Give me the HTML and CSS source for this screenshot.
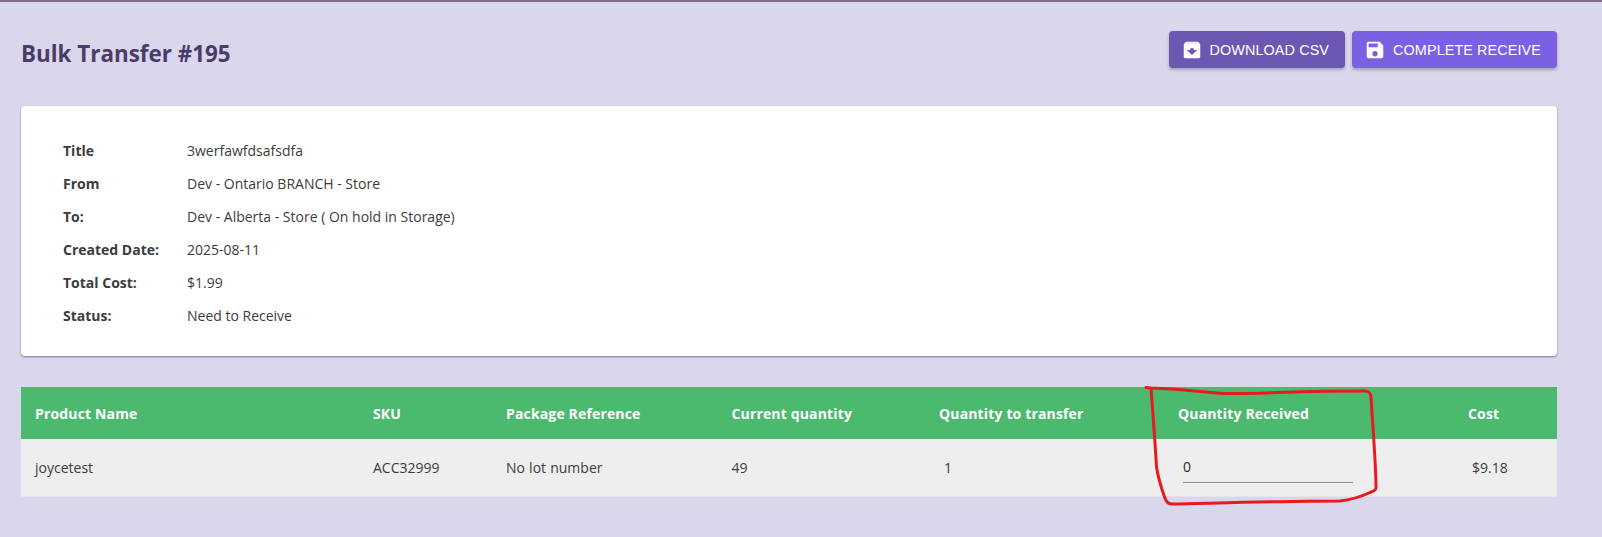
FILE: index.html
```html
<!DOCTYPE html>
<html lang="en">
<head>
<meta charset="utf-8">
<title>Bulk Transfer #195</title>
<link rel="stylesheet" href="styles.css">
</head>
<body>
<div class="page">
  <header class="head">
    <h1 class="title">Bulk Transfer #195</h1>
    <div class="actions">
      <button class="btn btn-dark" type="button">
        <svg class="ico" viewBox="0 0 24 24"><path d="M5.1 3.6h13.8l1.6 2H3.5z" opacity=".75"/><path d="M20.54 5.23l-1.39-1.68C18.88 3.21 18.47 3 18 3H6c-.47 0-.88.21-1.16.55L3.46 5.23C3.17 5.57 3 6.02 3 6.5V19c0 1.1.9 2 2 2h14c1.1 0 2-.9 2-2V6.5c0-.48-.17-.93-.46-1.27zM12 17.5L6.5 12H10v-2h4v2h3.5L12 17.5zM5.12 5l.81-1h12l.94 1H5.12z"/></svg>
        DOWNLOAD CSV
      </button>
      <button class="btn btn-main" type="button">
        <svg class="ico" viewBox="0 0 24 24"><path d="M17 3H5c-1.11 0-2 .9-2 2v14c0 1.1.89 2 2 2h14c1.1 0 2-.9 2-2V7l-4-4zm-5 16c-1.66 0-3-1.34-3-3s1.34-3 3-3 3 1.34 3 3-1.34 3-3 3zm3-10H5V5h10v4z"/></svg>
        COMPLETE RECEIVE
      </button>
    </div>
  </header>

  <section class="card">
    <dl class="info">
      <dt>Title</dt><dd>3werfawfdsafsdfa</dd>
      <dt>From</dt><dd>Dev - Ontario BRANCH - Store</dd>
      <dt>To:</dt><dd>Dev - Alberta - Store ( On hold in Storage)</dd>
      <dt>Created Date:</dt><dd>2025-08-11</dd>
      <dt>Total Cost:</dt><dd>$1.99</dd>
      <dt>Status:</dt><dd>Need to Receive</dd>
    </dl>
  </section>

  <section class="table">
    <div class="row row-head">
      <div>Product Name</div>
      <div>SKU</div>
      <div>Package Reference</div>
      <div>Current quantity</div>
      <div>Quantity to transfer</div>
      <div>Quantity Received</div>
      <div>Cost</div>
    </div>
    <div class="row row-body">
      <div>joycetest</div>
      <div>ACC32999</div>
      <div>No lot number</div>
      <div>49</div>
      <div class="transfer">1</div>
      <div class="qty-cell"><input class="qty" type="text" value="0" aria-label="Quantity Received"></div>
      <div class="cost">$9.18</div>
    </div>
  </section>
</div>

<svg class="scribble" viewBox="0 0 1602 537" aria-hidden="true">
  <path d="M1146 387.500 L1151 388 C1185 389 1205 393 1225 393.500 C1265 393.500 1300 391 1364 391 C1369 391 1370.500 393 1371 397 C1373 430 1376 465 1376 488 C1375.500 490.500 1373 491.500 1370 492.500 C1358 498 1350 500 1340 501 C1290 501 1220 503 1172 504 C1168 504 1166 502 1164.500 497 C1161 487 1158 477 1156.500 467 C1155 440 1153 415 1151 388" />
</svg>
</body>
</html>
```

FILE: styles.css
```css
* { box-sizing: border-box; }

html, body {
  margin: 0;
  height: 100%;
}

body {
  background: #dad6eb;
  font-family: "Open Sans", sans-serif;
  font-size: 14px;
  color: #3c3c3c;
  overflow: hidden;
  position: relative;
}

.page {
  min-height: 537px;
  border-top: 2px solid #7f6d8e;
  padding: 29px 45px 0 21px;
}

.head {
  display: flex;
  justify-content: space-between;
  align-items: flex-start;
  height: 75px;
}

.title {
  margin: 8px 0 0;
  font-size: 22.400px;
  line-height: 30px;
  font-weight: 700;
  color: #4b3b6b;
}

.actions {
  display: flex;
  gap: 7px;
}

.btn {
  display: flex;
  align-items: center;
  gap: 7px;
  height: 37px;
  padding: 0 16px 0 12px;
  border: 0;
  border-radius: 4px;
  color: #fff;
  font-family: "Liberation Sans", Arial, sans-serif;
  font-size: 14.400px;
  letter-spacing: 0.1px;
  box-shadow: 0 2px 3px rgba(60, 50, 100, 0.35);
}

.btn-dark { background: #6c58b3; }
.btn-main { background: #7a60e3; }

.ico {
  width: 22px;
  height: 22px;
  fill: #fff;
  flex: none;
}

.card {
  height: 250px;
  background: #fff;
  border-radius: 4px;
  box-shadow: 0 1px 2px rgba(50, 40, 90, 0.55);
  padding: 28px 42px;
}

.info {
  display: grid;
  grid-template-columns: 124px 1fr;
  grid-auto-rows: 33px;
  margin: 0;
  align-items: center;
}

.info dt { font-weight: 700; }
.info dd { margin: 0; }

.table {
  margin-top: 31px;
}

.row {
  display: grid;
  grid-template-columns: 338px 133px 225.5px 207.500px 239px 290px 103px;
}

.row > div {
  padding-left: 14px;
}

.row-head {
  height: 52px;
  align-items: center;
  background: #4cba6e;
  color: #fff;
  font-weight: 700;
  letter-spacing: 0.15px;
}

.row-body {
  height: 58px;
  align-items: center;
  background: #eee;
  border-bottom: 1px solid #e6e4ea;
  word-spacing: 0.5px;
}

.row > .transfer { padding-left: 19px; }
.row > .cost { padding-left: 18px; }
.row > .qty-cell { padding-left: 19px; align-self: start; }

.qty {
  display: block;
  width: 170px;
  height: 32px;
  margin-top: 12px;
  padding: 0;
  border: 0;
  border-bottom: 1px solid #8f8f8f;
  background: transparent;
  font: inherit;
  color: #2a2a2a;
  outline: none;
}

.scribble {
  position: absolute;
  top: 0;
  left: 0;
  width: 1602px;
  height: 537px;
  pointer-events: none;
}

.scribble path {
  fill: none;
  stroke: #e8191f;
  stroke-width: 3;
  stroke-linecap: round;
  stroke-linejoin: round;
}
```
